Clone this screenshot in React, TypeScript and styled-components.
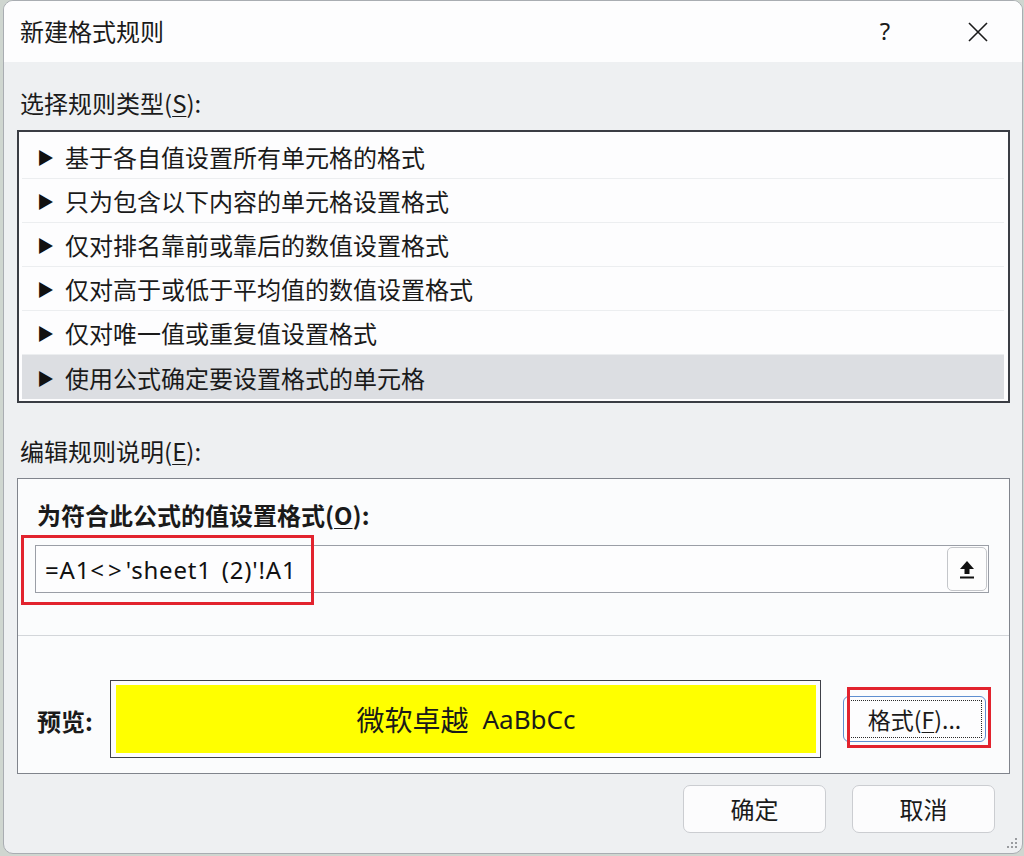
import React from "react";
import styled, { createGlobalStyle } from "styled-components";

const Global = createGlobalStyle`
  html, body { margin: 0; padding: 0; }
  body {
    width: 1024px; height: 856px; overflow: hidden;
    background: #cfd6d0;
    font-family: "Noto Sans CJK SC", "Noto Sans", sans-serif;
    color: #1a1a1a;
  }
`;

const Screen = styled.div`
  width: 1024px;
  height: 856px;
  display: flex;
  align-items: flex-start;
  padding-left: 3px;
  box-sizing: border-box;
`;

const Dialog = styled.div`
  position: relative;
  width: 1020px;
  height: 854px;
  box-sizing: border-box;
  border: 1px solid #a9adb2;
  border-radius: 10px;
  background: #eef0f2;
  overflow: hidden;
  display: flex;
  flex-direction: column;
`;

const TitleBar = styled.div`
  height: 61px;
  flex: none;
  background: #fdfdfe;
  display: flex;
  align-items: center;
  padding-left: 16px;
`;

const Title = styled.div`
  flex: 1;
  font-size: 24px;
  line-height: 32px;
  padding-bottom: 2px;
`;

const Help = styled.div`
  width: 26px;
  font-family: "Noto Sans", sans-serif;
  font-size: 24px;
  text-align: center;
  margin-right: 68px;
  padding-bottom: 2px;
`;

const CloseBox = styled.div`
  width: 24px;
  height: 24px;
  margin-right: 32px;
  display: flex;
  align-items: center;
  justify-content: center;
`;

const Body = styled.div`
  flex: 1;
  display: flex;
  flex-direction: column;
  padding: 25px 12px 0 13px;
`;

const SectionLabel = styled.div<{ $top?: number }>`
  font-size: 24px;
  line-height: 32px;
  padding-left: 3px;
  margin-top: ${(p) => p.$top ?? 0}px;
  margin-bottom: 11px;
  color: #1b1b1b;
`;

const Key = styled.span`
  text-decoration: underline;
  text-underline-offset: 3px;
  text-decoration-thickness: 1px;
`;

const ListBox = styled.div`
  border: 2px solid #3a3d44;
  background: #fdfdfe;
  padding: 3px 4px 2px 3px;
  display: flex;
  flex-direction: column;
`;

const Row = styled.div<{ $selected?: boolean }>`
  height: 44px;
  box-sizing: border-box;
  display: flex;
  align-items: center;
  padding-left: 15px;
  font-size: 24px;
  background: ${(p) => (p.$selected ? "#dcdee2" : "transparent")};
  border-bottom: 1px solid ${(p) => (p.$selected ? "#dcdee2" : "#eceef0")};
  &:last-child { border-bottom: none; }
`;

const Arrow = styled.span`
  width: 28px;
  font-size: 17px;
  line-height: 1;
  color: #111;
`;

const Panel = styled.div`
  margin-top: 0;
  border: 1px solid #80848c;
  background: #fbfcfd;
  display: flex;
  flex-direction: column;
`;

const FormulaSection = styled.div`
  padding: 20px 20px 42px 17px;
  border-bottom: 1px solid #d3d6da;
  display: flex;
  flex-direction: column;
`;

const BoldLabel = styled.div`
  font-size: 24px;
  font-weight: 700;
  line-height: 32px;
  padding-left: 2px;
  margin-bottom: 14px;
`;

const InputWrap = styled.div`
  position: relative;
  height: 48px;
  box-sizing: border-box;
  border: 1px solid #9a9ea6;
  background: #fdfdfe;
  display: flex;
  align-items: center;
  padding: 0 1px 0 9px;
`;

const FormulaText = styled.div`
  flex: 1;
  font-family: "Noto Sans", sans-serif;
  font-size: 24px;
  letter-spacing: 0.8px;
  word-spacing: 3px;
  color: #111;
`;

const Op = styled.span`
  letter-spacing: 4px;
`;

const PickButton = styled.div`
  width: 40px;
  height: 44px;
  box-sizing: border-box;
  border: 1px solid #c4c6ca;
  border-radius: 5px;
  background: #fdfdfd;
  display: flex;
  align-items: center;
  justify-content: center;
`;

const Highlight = styled.div<{ $l: number; $t: number; $w: number; $h: number; $b: number }>`
  position: absolute;
  left: ${(p) => p.$l}px;
  top: ${(p) => p.$t}px;
  width: ${(p) => p.$w}px;
  height: ${(p) => p.$h}px;
  box-sizing: border-box;
  border: ${(p) => p.$b}px solid #e2232e;
  pointer-events: none;
`;

const PreviewRow = styled.div`
  display: flex;
  align-items: center;
  padding: 44px 0 15px 19px;
`;

const PreviewLabel = styled.div`
  width: 73px;
  font-size: 24px;
  font-weight: 700;
  padding-top: 2px;
`;

const PreviewBox = styled.div`
  width: 711px;
  height: 78px;
  box-sizing: border-box;
  border: 1px solid #3e4048;
  background: #fdfdfe;
  padding: 4px 4px 4px 5px;
`;

const PreviewFill = styled.div`
  height: 100%;
  background: #ffff00;
  display: flex;
  align-items: center;
  justify-content: center;
  font-size: 28px;
  gap: 14px;
  color: #1a1a1a;
`;

const Latin = styled.span`
  font-family: "Noto Sans", sans-serif;
  font-size: 26px;
`;

const FormatWrap = styled.div`
  position: relative;
  margin-left: 22px;
`;

const FormatButton = styled.div`
  width: 143px;
  height: 46px;
  box-sizing: border-box;
  border: 1px solid #5f8fd0;
  border-radius: 6px;
  background: #fdfdfe;
  padding: 3px;
  display: flex;
`;

const FocusRect = styled.div`
  flex: 1;
  border: 1px dotted #2a2a2a;
  display: flex;
  align-items: center;
  justify-content: center;
  font-size: 23px;
`;

const Footer = styled.div`
  display: flex;
  justify-content: flex-end;
  gap: 26px;
  padding: 11px 15px 0 0;
`;

const Button = styled.div`
  width: 143px;
  height: 48px;
  box-sizing: border-box;
  border: 1px solid #cbcdd1;
  border-radius: 7px;
  background: #fcfcfd;
  display: flex;
  align-items: center;
  justify-content: center;
  font-size: 24px;
  padding-bottom: 2px;
`;

const Grip = styled.svg`
  position: absolute;
  right: 3px;
  bottom: 3px;
`;

const rules = [
  "基于各自值设置所有单元格的格式",
  "只为包含以下内容的单元格设置格式",
  "仅对排名靠前或靠后的数值设置格式",
  "仅对高于或低于平均值的数值设置格式",
  "仅对唯一值或重复值设置格式",
  "使用公式确定要设置格式的单元格",
];

export default function App() {
  return (
    <>
      <Global />
      <Screen>
        <Dialog>
          <TitleBar>
            <Title>新建格式规则</Title>
            <Help>?</Help>
            <CloseBox>
              <svg width="22" height="22" viewBox="0 0 22 22">
                <path d="M2 2 L20 20 M20 2 L2 20" stroke="#1a1a1a" strokeWidth="1.6" fill="none" />
              </svg>
            </CloseBox>
          </TitleBar>
          <Body>
            <SectionLabel>
              选择规则类型(<Key>S</Key>):
            </SectionLabel>
            <ListBox>
              {rules.map((r, i) => (
                <Row key={r} $selected={i === rules.length - 1}>
                  <Arrow>▶</Arrow>
                  {r}
                </Row>
              ))}
            </ListBox>
            <SectionLabel $top={32}>
              编辑规则说明(<Key>E</Key>):
            </SectionLabel>
            <Panel>
              <FormulaSection>
                <BoldLabel>
                  为符合此公式的值设置格式(<Key>O</Key>):
                </BoldLabel>
                <InputWrap>
                  <FormulaText>
                    =A1<Op>&lt;&gt;</Op>'sheet1 (2)'!A1
                  </FormulaText>
                  <PickButton>
                    <svg width="20" height="22" viewBox="0 0 20 22">
                      <path d="M10 3 L3 11 H7.5 V16 H12.5 V11 H17 Z" fill="#111" />
                      <rect x="3" y="18.5" width="14" height="2" fill="#111" />
                    </svg>
                  </PickButton>
                  <Highlight $l={-15} $t={-11} $w={293} $h={70} $b={3} />
                </InputWrap>
              </FormulaSection>
              <PreviewRow>
                <PreviewLabel>预览:</PreviewLabel>
                <PreviewBox>
                  <PreviewFill>
                    <span>微软卓越</span>
                    <Latin>AaBbCc</Latin>
                  </PreviewFill>
                </PreviewBox>
                <FormatWrap>
                  <FormatButton>
                    <FocusRect>
                      格式(<Key>F</Key>)...
                    </FocusRect>
                  </FormatButton>
                  <Highlight $l={4} $t={-9} $w={144} $h={61} $b={3} />
                </FormatWrap>
              </PreviewRow>
            </Panel>
            <Footer>
              <Button>确定</Button>
              <Button>取消</Button>
            </Footer>
          </Body>
          <Grip width="14" height="14" viewBox="0 0 14 14">
            {[
              [11, 3],
              [11, 7],
              [7, 7],
              [11, 11],
              [7, 11],
              [3, 11],
            ].map(([x, y]) => (
              <rect key={`${x}-${y}`} x={x - 1} y={y - 1} width="2" height="2" fill="#9a9ca0" />
            ))}
          </Grip>
        </Dialog>
      </Screen>
    </>
  );
}
